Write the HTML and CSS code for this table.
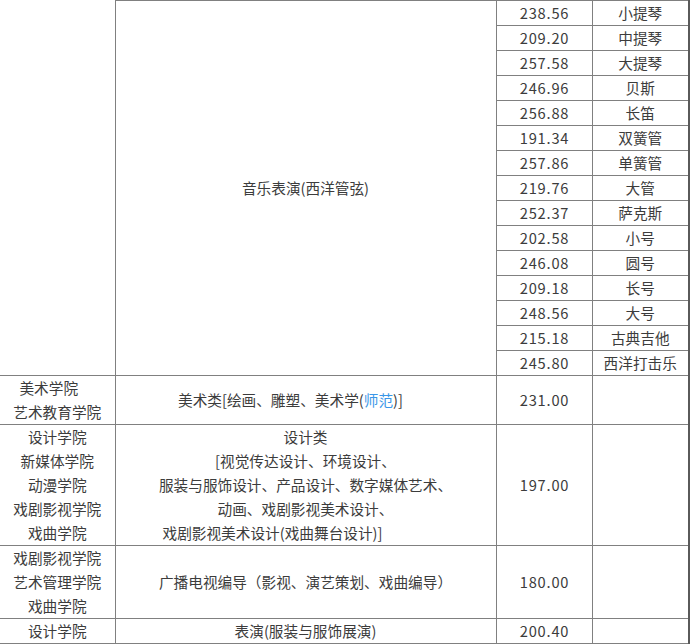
FILE: index.html
```html
<!DOCTYPE html>
<html lang="zh-CN">
<head>
<meta charset="utf-8">
<title>录取分数线</title>
<link rel="stylesheet" href="styles.css">
</head>
<body>
<table class="score">
  <colgroup>
    <col class="c1"><col class="c2"><col class="c3"><col class="c4">
  </colgroup>
  <tr>
    <td rowspan="15" class="college blank"></td>
    <td rowspan="15" class="major">音乐表演(西洋管弦)</td>
    <td class="num">238.56</td><td class="dir">小提琴</td>
  </tr>
  <tr><td class="num">209.20</td><td class="dir">中提琴</td></tr>
  <tr><td class="num">257.58</td><td class="dir">大提琴</td></tr>
  <tr><td class="num">246.96</td><td class="dir">贝斯</td></tr>
  <tr><td class="num">256.88</td><td class="dir">长笛</td></tr>
  <tr><td class="num">191.34</td><td class="dir">双簧管</td></tr>
  <tr><td class="num">257.86</td><td class="dir">单簧管</td></tr>
  <tr><td class="num">219.76</td><td class="dir">大管</td></tr>
  <tr><td class="num">252.37</td><td class="dir">萨克斯</td></tr>
  <tr><td class="num">202.58</td><td class="dir">小号</td></tr>
  <tr><td class="num">246.08</td><td class="dir">圆号</td></tr>
  <tr><td class="num">209.18</td><td class="dir">长号</td></tr>
  <tr><td class="num">248.56</td><td class="dir">大号</td></tr>
  <tr><td class="num">215.18</td><td class="dir">古典吉他</td></tr>
  <tr><td class="num">245.80</td><td class="dir">西洋打击乐</td></tr>
  <tr>
    <td class="college"><span class="pad-s">美术学院</span><br>艺术教育学院</td>
    <td class="major"><span class="pad-m">美术类[绘画、雕塑、美术学(<span class="link">师范</span>)]</span></td>
    <td class="num">231.00</td><td class="dir"></td>
  </tr>
  <tr>
    <td class="college">设计学院<br>新媒体学院<br>动漫学院<br>戏剧影视学院<br>戏曲学院</td>
    <td class="major">设计类<br>[视觉传达设计、环境设计、<br>服装与服饰设计、产品设计、数字媒体艺术、<br>动画、戏剧影视美术设计、<br><span class="pad-l">戏剧影视美术设计(戏曲舞台设计)]</span></td>
    <td class="num">197.00</td><td class="dir"></td>
  </tr>
  <tr>
    <td class="college">戏剧影视学院<br>艺术管理学院<br>戏曲学院</td>
    <td class="major">广播电视编导（影视、演艺策划、戏曲编导）</td>
    <td class="num">180.00</td><td class="dir"></td>
  </tr>
  <tr>
    <td class="college">设计学院</td>
    <td class="major">表演(服装与服饰展演)</td>
    <td class="num">200.40</td><td class="dir"></td>
  </tr>
</table>
</body>
</html>
```

FILE: styles.css
```css
html, body {
  margin: 0;
  padding: 0;
  background: #ffffff;
}

.score {
  border-collapse: collapse;
  table-layout: fixed;
  width: 689px;
  font-family: "Noto Sans CJK SC", "Microsoft YaHei", sans-serif;
  font-size: 11pt;
  line-height: 24px;
  color: #3c3c3c;
  border: none;
}

.c1 { width: 115px; }
.c2 { width: 381px; }
.c3 { width: 96px; }
.c4 { width: 97px; }

.score td {
  border: 1px solid #808080;
  padding: 0;
  text-align: center;
  vertical-align: middle;
  white-space: nowrap;
}

.score td.num {
  letter-spacing: 0.8px;
  text-indent: 1px;
}

.score td.college {
  border-left: none;
}

.score td.blank {
  border-top: none;
}

.score td.dir {
  border-right: 2px solid #5a5a5a;
}

.link {
  color: #3a97e8;
}

.pad-s {
  padding-right: 17px;
}

.pad-m {
  padding-right: 30px;
}

.pad-l {
  padding-right: 66px;
}
```
